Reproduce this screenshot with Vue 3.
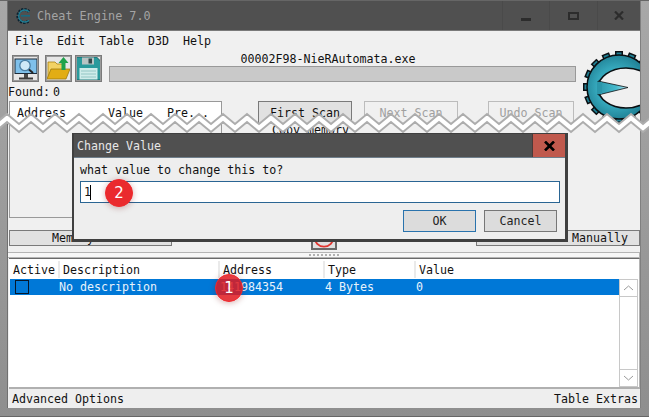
<script setup>
const period = 24
const pts = []
for (let i = -1; i < 30; i++) {
  const px = 7 + i * period
  pts.push([px, 4], [px + period / 2, 14])
}
const upper = pts.map(p => p.join(',')).join(' ')
const lower = pts.map(p => `${p[0]},${p[1] + 8}`).join(' ')
const band = upper + ' ' + pts.slice().reverse().map(p => `${p[0]},${p[1] + 8}`).join(' ')
const teeth = Array.from({ length: 16 }, (_, i) => i * 22.5)
</script>

<template>
  <div class="shot">
    <div class="win">
      <header class="title">
        <svg class="app-ico" width="16" height="16" viewBox="0 0 16 16">
          <path d="M13 3.5A6.5 6.5 0 1 0 13 12.5" fill="none" stroke="#0b2230" stroke-width="3" stroke-dasharray="2 1" />
          <path d="M13 3.8A6 6 0 1 0 13 12.2" fill="none" stroke="#1f7f96" stroke-width="1.4" />
          <path d="M5 7h9v1.6H5z" fill="#176a80" />
        </svg>
        <span class="title-text">Cheat Engine 7.0</span>
        <div class="controls">
          <span class="ctl c1"><i class="min"></i></span>
          <span class="ctl c2"><i class="max"></i></span>
          <span class="ctl c3"><svg width="10" height="9" viewBox="0 0 10 9"><path d="M1 .5l8 8M9 .5l-8 8" stroke="#2c2c2c" stroke-width="2.2" /></svg></span>
        </div>
      </header>

      <nav class="menu">
        <span class="m1">File</span><span class="m2">Edit</span><span class="m3">Table</span><span class="m4">D3D</span><span>Help</span>
      </nav>

      <div class="upper">
        <div class="upper-main">
          <div class="toolbar">
            <button class="tool">
              <svg width="24" height="24" viewBox="0 0 24 24">
                <rect x="0.5" y="1.5" width="23" height="15.5" fill="#1d2a38" />
                <rect x="1.5" y="2.5" width="21" height="13.5" fill="#7fc0ea" />
                <rect x="10" y="17" width="4" height="4" fill="#4a4a4a" />
                <rect x="5" y="20.5" width="14" height="2" fill="#3d3d3d" />
                <circle cx="11" cy="8.5" r="5.2" fill="#cfe9f8" stroke="#4a7fa5" stroke-width="1.3" />
                <path d="M15 12.5l4 3.5" stroke="#222" stroke-width="2" />
              </svg>
            </button>
            <button class="tool tool-b">
              <svg width="25" height="25" viewBox="0 0 25 25">
                <path d="M2 6h7l2 2h6v14H2z" fill="#f2d264" stroke="#a9820f" stroke-width=".8" />
                <path d="M5 13h19l-4 10H1z" fill="#e2ad14" stroke="#9c7a10" stroke-width=".8" />
                <path d="M17.5 1l5 6h-3v7h-4V7h-3z" fill="#1fa24a" />
              </svg>
            </button>
            <button class="tool tool-c">
              <svg width="25" height="25" viewBox="0 0 25 25">
                <path d="M0.5 1h20l4 4v19h-24z" fill="#2a9a9c" stroke="#155f62" />
                <rect x="6" y="1.5" width="12" height="7" fill="#b9c4c4" />
                <rect x="12.5" y="2.5" width="3.5" height="5" fill="#33484a" />
                <rect x="3.5" y="12" width="18" height="11.5" fill="#cfecea" />
                <path d="M5 15h15M5 18h15M5 21h15" stroke="#93c6c4" />
              </svg>
            </button>
            <div class="proc">
              <div class="proc-name">00002F98-NieRAutomata.exe</div>
              <div class="bar"></div>
            </div>
          </div>

          <div class="found">Found:<span class="found-n">0</span></div>

          <div class="scan">
            <div class="list">
              <div class="list-head">
                <span class="lh1">Address</span><span class="lh2">Value</span><span class="lh3">Pre...</span>
              </div>
            </div>
            <div class="scan-side">
              <div class="scan-btns">
                <button class="btn first">First Scan</button>
                <button class="btn off next">Next Scan</button>
                <button class="btn off undo">Undo Scan</button>
              </div>
              <div class="frag">Copy memory</div>
            </div>
          </div>
        </div>

        <div class="logo">
          <svg width="58" height="78" viewBox="0 0 58 78">
            <defs>
              <radialGradient id="ring" cx="0.45" cy="0.5" r="0.55">
                <stop offset="0.55" stop-color="#35a7bb" />
                <stop offset="1" stop-color="#1d7b8f" />
              </radialGradient>
              <linearGradient id="spike" x1="0" x2="1" y1="0" y2="0">
                <stop offset="0" stop-color="#2b96aa" />
                <stop offset="0.6" stop-color="#45b9cc" />
                <stop offset="1" stop-color="#bfeaf4" />
              </linearGradient>
            </defs>
            <g transform="translate(37 37)">
              <rect v-for="a in teeth" :key="a" x="-4" y="-36" width="8" height="8" fill="#0a0f12" :transform="`rotate(${a})`" />
              <rect v-for="a in teeth" :key="'t' + a" x="-2.5" y="-34.5" width="5" height="6" fill="#1f7f93" :transform="`rotate(${a})`" />
              <circle r="32" fill="url(#ring)" stroke="#0a0f12" stroke-width="1.5" />
              <ellipse cx="7" cy="1" rx="28" ry="20" fill="#f0f0f0" stroke="#0a0f12" stroke-width="1.6" />
              <path d="M-21 -6L9 0.5-21 8Z" fill="url(#spike)" stroke="#0a0f12" stroke-width="0.8" stroke-linejoin="round" />
              <rect x="-22" y="-5" width="5" height="12" fill="#2b96aa" />
            </g>
          </svg>
        </div>
      </div>

      <div class="mem-row">
        <button class="btn mem">Memory View</button>
        <button class="btn stop">
          <svg width="24" height="24" viewBox="0 0 24 24"><circle cx="12" cy="12" r="10.5" fill="none" stroke="#e0352f" stroke-width="2" /></svg>
        </button>
        <button class="btn add">Add Address Manually</button>
      </div>

      <div class="split"><span class="grip"></span></div>

      <section class="table">
        <div class="thead">
          <span>Active</span><span>Description</span><span>Address</span><span>Type</span><span>Value</span>
        </div>
        <div class="tbody">
          <div class="rows">
            <div class="row">
              <span class="cell"><i class="check"></i></span>
              <span class="cell">No description</span>
              <span class="cell">141984354</span>
              <span class="cell">4 Bytes</span>
              <span class="cell">0</span>
            </div>
          </div>
          <div class="sbar">
            <span class="sb-btn"><svg width="11" height="6" viewBox="0 0 11 6"><path d="M1 5l4.5-4 4.5 4" fill="none" stroke="#9a9a9a" /></svg></span>
            <span class="sb-btn"><svg width="11" height="6" viewBox="0 0 11 6"><path d="M1 1l4.5 4 4.5-4" fill="none" stroke="#9a9a9a" /></svg></span>
          </div>
        </div>
      </section>

      <footer class="foot"><span>Advanced Options</span><span>Table Extras</span></footer>
    </div>

    <svg class="tear" width="649" height="30" viewBox="0 0 649 30">
      <polygon :points="band" fill="#ffffff" />
      <polyline :points="upper" fill="none" stroke="#adadad" stroke-width="2" />
      <polyline :points="lower" fill="none" stroke="#adadad" stroke-width="2" />
    </svg>

    <div class="dialog">
      <div class="dlg-title">
        <span>Change Value</span>
        <span class="dlg-close"><svg width="11" height="10" viewBox="0 0 11 10"><path d="M1 .5l9 9M10 .5l-9 9" stroke="#000" stroke-width="2.6" /></svg></span>
      </div>
      <div class="dlg-body">
        <div class="dlg-label">what value to change this to?</div>
        <div class="dlg-input"><span>1</span><i class="caret"></i></div>
        <div class="dlg-btns">
          <button class="dbtn ok">OK</button>
          <button class="dbtn">Cancel</button>
        </div>
      </div>
    </div>

    <div class="badge b1">1</div>
    <div class="badge b2">2</div>
  </div>
</template>

<style>
html, body { margin: 0; background: #9c9c9c; }
</style>

<style scoped>
.shot {
  position: relative;
  width: 649px;
  height: 417px;
  overflow: hidden;
  box-sizing: border-box;
  padding: 1px 8px 9px 7px;
  background: linear-gradient(#a8a8a8, #8e8e8e);
  font: 11.65px/14px "DejaVu Sans Mono", monospace;
  color: #111;
  box-shadow: inset 0 -1px 0 #666, inset 0 1px 0 #666;
}
.win {
  height: 100%;
  box-sizing: border-box;
  background: #f0f0f0;
  border-left: 1px solid #707070;
  border-right: 1px solid #808080;
  display: flex;
  flex-direction: column;
  overflow: hidden;
}
button { font: inherit; padding: 0; margin: 0; }

.title {
  height: 30px;
  flex: none;
  box-sizing: border-box;
  background: #505050;
  border-bottom: 1px solid #7a7a7a;
  display: flex;
  align-items: center;
  padding-left: 8px;
}
.app-ico { margin-right: 5px; }
.title-text { color: #a4a4a4; font-size: 11.8px; }
.controls { margin-left: auto; display: flex; height: 100%; }
.ctl {
  display: flex;
  align-items: center;
  justify-content: center;
  box-sizing: border-box;
  border-left: 1px solid #4a4a4a;
}
.c1 { width: 47px; }
.c2 { width: 48px; }
.c3 { width: 43px; }
.ctl .min { width: 10px; height: 3px; background: #2c2c2c; margin-top: 7px; }
.ctl .max { width: 7px; height: 4px; border: 2px solid #2c2c2c; }

.menu {
  height: 19px;
  flex: none;
  display: flex;
  align-items: center;
  padding-left: 7px;
}
.m1 { width: 42px; }
.m2 { width: 42px; }
.m3 { width: 49px; }
.m4 { width: 35px; }

.upper { display: flex; height: 168px; flex: none; }
.upper-main { width: 574px; flex: none; }
.toolbar { display: flex; padding: 5px 0 0 4px; height: 27px; }
.tool {
  width: 27px;
  height: 27px;
  box-sizing: border-box;
  border: 1px solid #7a7a7a;
  outline: 1px solid #9a9a9a;
  outline-offset: -2px;
  background: #e6e6e6;
  display: flex;
  align-items: center;
  justify-content: center;
}
.tool-b { margin-left: 6px; }
.tool-c { margin-left: 3px; }
.proc { margin: -3px 0 0 7px; width: 467px; }
.proc-name { height: 14px; text-align: center; padding-right: 29px; }
.bar {
  height: 16px;
  box-sizing: border-box;
  background: #c9c9c9;
  border: 1px solid #999;
}
.found { height: 19px; display: flex; align-items: center; }
.found-n { margin-left: 3px; }

.scan { display: flex; padding-left: 1px; }
.list {
  width: 213px;
  height: 117px;
  box-sizing: border-box;
  border: 1px solid #999;
  background: #f0f0f0;
}
.list-head {
  background: #fff;
  height: 22px;
  box-sizing: border-box;
  border-bottom: 1px solid #ddd;
  display: flex;
  align-items: center;
  padding-left: 7px;
}
.lh1 { width: 91px; }
.lh2 { width: 59px; }

.btn {
  box-sizing: border-box;
  background: #e1e1e1;
  border: 1px solid #7a7a7a;
  color: #111;
}
.off { background: #f0f0f0; border-color: #bcbcbc; color: #a0a0a0; }
.scan-side { margin-left: 36px; }
.scan-btns { display: flex; }
.first { width: 94px; height: 23px; }
.next { width: 94px; height: 23px; margin-left: 12px; }
.undo { width: 86px; height: 23px; margin-left: 30px; }
.frag { padding-left: 14px; margin-top: -1px; }

.logo { flex: none; width: 58px; overflow: hidden; }

.mem-row { display: flex; height: 26px; flex: none; margin-top: 6px; position: relative; }
.mem { width: 163px; height: 16px; margin: 6px 0 0 1px; line-height: 13px; }
.stop {
  width: 26px;
  height: 26px;
  margin-left: 139px;
  border: 2px solid #6a6a6a;
  display: flex;
  align-items: center;
  justify-content: center;
}
.add { width: 164px; height: 16px; margin: 6px 0 0 139px; line-height: 13px; }

.split {
  height: 6px;
  flex: none;
  margin-top: 2px;
  box-sizing: border-box;
  border: 1px solid #b4b4b4;
  border-left-width: 0;
  background: #f7f7f7;
  display: flex;
  justify-content: center;
  align-items: center;
}
.grip {
  width: 30px;
  height: 2px;
  background: repeating-linear-gradient(90deg, #b0b0b0 0 2px, transparent 2px 4px);
}

.table {
  flex: none;
  height: 131px;
  box-sizing: border-box;
  margin-left: 1px;
  border-top: 1px solid #6a6a6a;
  border-bottom: 2px solid #b0b0b0;
  border-right: 1px solid #b4b4b4;
  background: #fff;
  display: flex;
  flex-direction: column;
}
.thead {
  height: 20px;
  flex: none;
  box-sizing: border-box;
  display: grid;
  grid-template-columns: 50px 160px 105px 91px 1fr;
  align-items: center;
  padding: 2px 0 1px 1px;
}
.thead span {
  height: 100%;
  display: flex;
  align-items: center;
  padding-left: 3px;
  box-sizing: border-box;
  border-right: 2px solid #eaeaea;
}
.thead span:last-child { border-right: 0; }
.tbody { flex: 1; display: flex; }
.rows { flex: 1; }
.row {
  height: 16px;
  margin-left: 1px;
  background: #0078d7;
  color: #e8f2fb;
  display: grid;
  grid-template-columns: 49px 161px 105px 91px 1fr;
  align-items: center;
}
.check {
  display: block;
  width: 12px;
  height: 12px;
  margin-left: 5px;
  border: 1px solid #06182a;
}
.sbar {
  width: 17px;
  flex: none;
  margin-right: 1px;
  border-left: 1px solid #c8c8c8;
  border-right: 1px solid #c8c8c8;
  display: flex;
  flex-direction: column;
  justify-content: space-between;
}
.sb-btn {
  height: 16px;
  display: flex;
  align-items: center;
  justify-content: center;
  border-top: 1px solid #c8c8c8;
  border-bottom: 1px solid #c8c8c8;
}
.foot {
  flex: 1;
  display: flex;
  justify-content: space-between;
  align-items: center;
  padding: 0 2px 0 4px;
  background: #eee;
}

.tear { position: absolute; left: 0; top: 110px; }

.dialog {
  position: absolute;
  left: 72px;
  top: 133px;
  width: 496px;
  height: 109px;
  box-sizing: border-box;
  background: #eee;
  border: 1px solid #404040;
  border-left-width: 2px;
  border-right-width: 3px;
  border-bottom-width: 3px;
  display: flex;
  flex-direction: column;
}
.dlg-title {
  height: 24px;
  flex: none;
  box-sizing: border-box;
  background: #505050;
  border-bottom: 1px solid #6f7f8c;
  color: #e8e8e8;
  display: flex;
  align-items: center;
  justify-content: space-between;
  padding-left: 3px;
}
.dlg-close {
  width: 33px;
  height: 100%;
  background: #c0594d;
  border-left: 1px solid #4a3a38;
  box-sizing: border-box;
  display: flex;
  align-items: center;
  justify-content: center;
}
.dlg-body { padding: 4px 7px 0 6px; }
.dlg-label { height: 19px; line-height: 17px; }
.dlg-input {
  height: 22px;
  box-sizing: border-box;
  border: 1px solid #2a6593;
  background: #fff;
  width: 480px;
  display: flex;
  align-items: center;
  padding-left: 3px;
}
.caret { width: 1px; height: 15px; background: #000; margin-left: -1px; }
.dlg-btns { display: flex; justify-content: flex-end; gap: 8px; margin-top: 7px; padding-right: 1px; }
.dbtn {
  width: 73px;
  height: 22px;
  box-sizing: border-box;
  background: #dcdcdc;
  border: 1px solid #777;
  color: #222;
}
.ok { border-color: #2a73ad; }

.badge {
  position: absolute;
  width: 28px;
  height: 28px;
  border-radius: 50%;
  display: flex;
  align-items: center;
  justify-content: center;
  color: #fff;
  font: 15px "DejaVu Sans", sans-serif;
  box-shadow: 0 1px 6px rgba(120, 0, 0, 0.3);
  border: 1px solid #f0282c;
  box-sizing: border-box;
}
.b1 { left: 215px; top: 274px; background: rgba(225, 25, 30, 0.85); }
.b2 { left: 105px; top: 179px; background: #ea2a2e; }
</style>
